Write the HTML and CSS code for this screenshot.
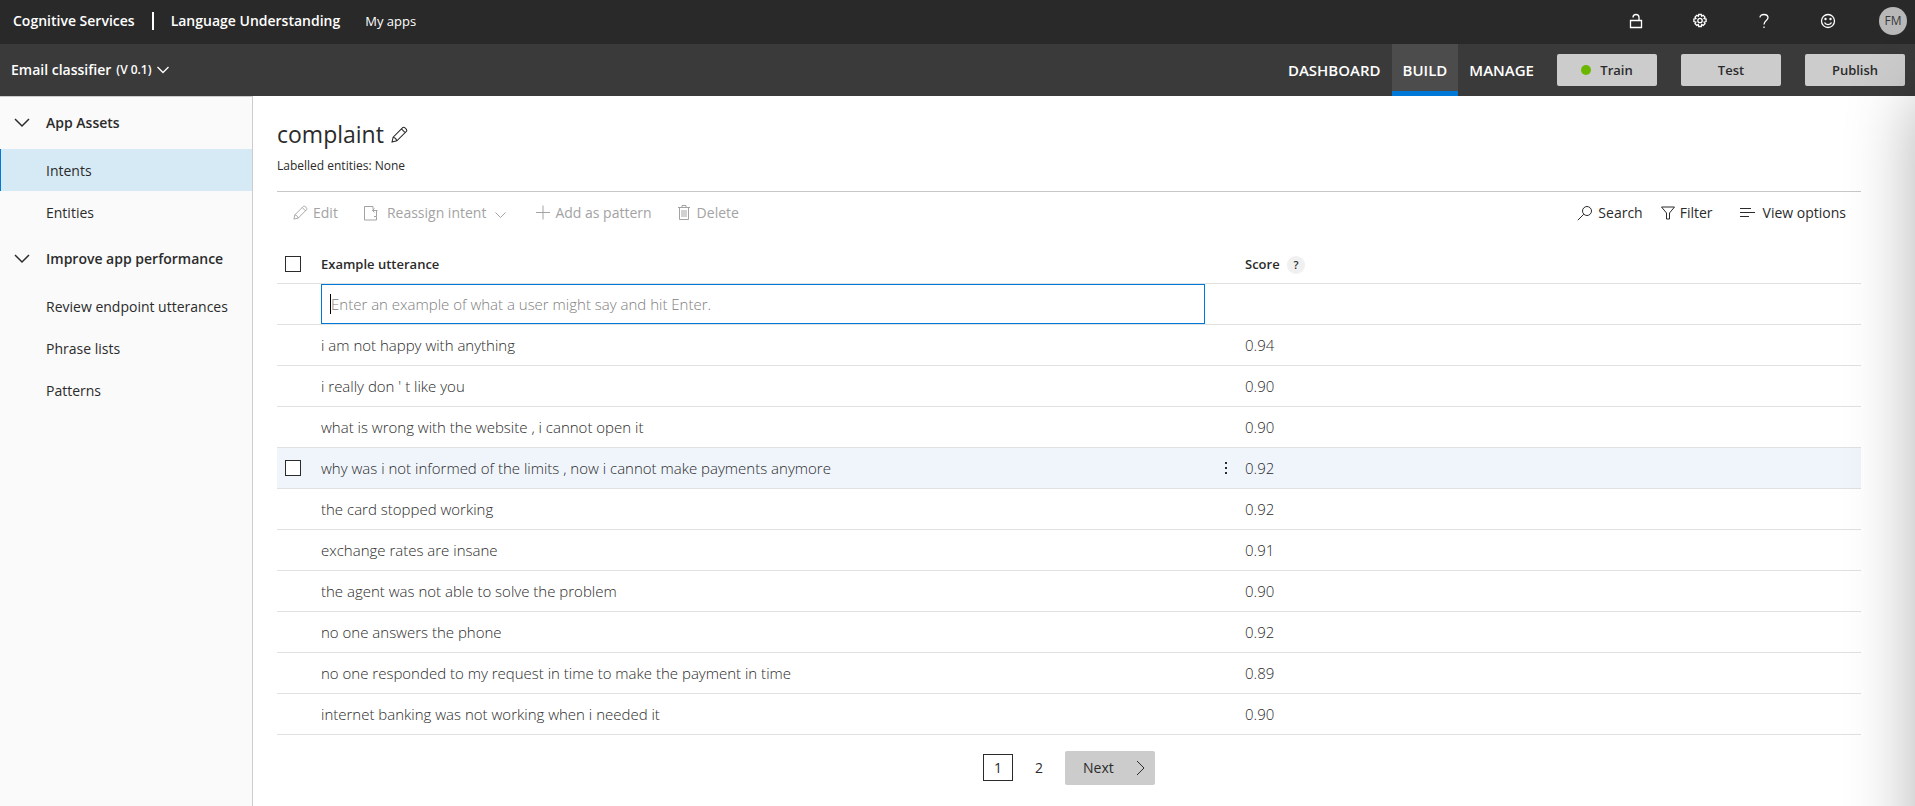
FILE: index.html
```html
<!DOCTYPE html>
<html lang="en">
<head>
  <meta charset="UTF-8" />
  <meta name="viewport" content="width=device-width, initial-scale=1.0"/>
  <title>Language Understanding</title>
  <link rel="stylesheet" href="styles.css">
</head>
<body>

  <header class="topbar">
    <a href="#" class="brand">Cognitive Services</a>
    <span class="divider"></span>
    <a href="#" class="brand">Language Understanding</a>
    <a href="#" class="my-apps">My apps</a>
    <div class="top-icons">
      <button type="button" aria-label="Security">
        <svg width="14" height="16" viewBox="0 0 14 16"><path d="M1.500 7.500h11v7h-11zM4 4.500a3 3 0 0 1 6 0v3"/></svg>
      </button>
      <button type="button" aria-label="Settings">
        <svg width="16" height="16" viewBox="0 0 16 16"><path d="M6.700 1.500h2.600l.4 1.700 1.500-.9 1.800 1.800-.9 1.500 2 .4v2.600l-2 .5.9 1.500-1.800 1.800-1.500-.9-.4 2H6.700l-.4-2-1.500.9L3 10.600l.9-1.500-2-.5V6l2-.4L3 4.100l1.800-1.800 1.500.9z"/><circle cx="8" cy="7.500" r="2.200"/></svg>
      </button>
      <button type="button" aria-label="Help">
        <svg width="12" height="16" viewBox="0 0 12 16"><path d="M2 4.500C2 2.500 3.600 1.500 6 1.500s4 1.200 4 3.200C10 7.500 6 7.500 6 11.500M6 13.500v1.500"/></svg>
      </button>
      <button type="button" aria-label="Feedback">
        <svg width="16" height="16" viewBox="0 0 16 16"><circle cx="8" cy="8" r="6.500"/><path d="M4.500 9.500c1.200 2.800 5.800 2.800 7 0"/><circle class="dot" cx="5.500" cy="6" r="1.200"/><circle class="dot" cx="10.500" cy="6" r="1.200"/></svg>
      </button>
      <button type="button" class="avatar">FM</button>
    </div>
  </header>

  <div class="appbar">
    <button type="button" class="app-name">Email classifier <small>(V 0.1)</small>
      <svg width="12" height="8" viewBox="0 0 12 8"><path d="M.5 1L6 6.500 11.500 1"/></svg>
    </button>
    <nav class="tabs">
      <a href="#">DASHBOARD</a>
      <a href="#" class="active">BUILD</a>
      <a href="#">MANAGE</a>
    </nav>
    <div class="actions">
      <button type="button"><span class="status"></span>Train</button>
      <button type="button">Test</button>
      <button type="button">Publish</button>
    </div>
  </div>

  <div class="layout">
    <nav class="sidebar">
      <button type="button" class="group">
        <svg width="16" height="10" viewBox="0 0 16 10"><path d="M1 1l7 7 7-7"/></svg>App Assets
      </button>
      <a href="#" class="active">Intents</a>
      <a href="#">Entities</a>
      <button type="button" class="group">
        <svg width="16" height="10" viewBox="0 0 16 10"><path d="M1 1l7 7 7-7"/></svg>Improve app performance
      </button>
      <a href="#">Review endpoint utterances</a>
      <a href="#">Phrase lists</a>
      <a href="#">Patterns</a>
    </nav>

    <main class="content">
      <div class="title">
        <h1>complaint</h1>
        <button type="button" aria-label="Rename intent">
          <svg width="17" height="17" viewBox="0 0 16 16"><path d="M1 15l1-4.500L11 1.500c1.300-1.300 4.800 2 3.500 3.500l-9 9zM2 10.500c1.500.2 3 1.500 3.500 3.500M9.800 2.700l3.500 3.500"/></svg>
        </button>
      </div>
      <p class="labelled">Labelled entities: None</p>

      <div class="toolbar">
        <button type="button" class="edit" disabled>
          <svg width="15" height="15" viewBox="0 0 16 16"><path d="M1 15l1-4.500L11 1.500c1.300-1.300 4.800 2 3.500 3.500l-9 9zM2 10.500c1.500.2 3 1.500 3.500 3.500M9.800 2.700l3.500 3.500"/></svg>Edit
        </button>
        <button type="button" class="reassign" disabled>
          <svg width="14" height="16" viewBox="0 0 14 16"><path d="M9 1.500H.5v13.500h12v-3.500M9 1.500v3M13.500 5.500H8.500M10.500 3.500l-2 2 2 2M12.500 5.500v6h-2.500"/></svg>Reassign intent
          <svg class="caret" width="11" height="7" viewBox="0 0 11 7"><path d="M.5 .5l5 5 5-5"/></svg>
        </button>
        <button type="button" class="add" disabled>
          <svg width="14" height="15" viewBox="0 0 14 15"><path d="M7 .500v14M0 7.500h14"/></svg>Add as pattern
        </button>
        <button type="button" class="delete" disabled>
          <svg width="12" height="15" viewBox="0 0 12 15"><path d="M0 2.500h12M4 2.500v-2h4v2M1.500 2.500v12h9v-12M4 5v7M6 5v7M8 5v7"/></svg>Delete
        </button>
        <div class="toolbar-right">
          <button type="button">
            <svg width="16" height="16" viewBox="0 0 16 16"><circle cx="10" cy="6" r="4.500"/><path d="M6.800 9.200L.8 15.200"/></svg>Search
          </button>
          <button type="button" class="filter">
            <svg width="14" height="14" viewBox="0 0 14 14"><path d="M.5 1h13L8.500 7v6h-3V7z"/></svg>Filter
          </button>
          <button type="button" class="view">
            <svg width="16" height="12" viewBox="0 0 16 12"><path d="M1 1.500h11M1 5.500h15M1 9.500h9"/></svg>View options
          </button>
        </div>
      </div>

      <table class="utterances">
        <colgroup>
          <col class="col-check">
          <col>
          <col class="col-score">
        </colgroup>
        <thead>
          <tr>
            <th><input type="checkbox" aria-label="Select all utterances"></th>
            <th>Example utterance</th>
            <th>Score <button type="button" class="help">?</button></th>
          </tr>
        </thead>
        <tbody>
          <tr class="entry">
            <td></td>
            <td><input type="text" class="new-utterance" aria-label="New utterance" placeholder="Enter an example of what a user might say and hit Enter."></td>
            <td></td>
          </tr>
          <tr><td></td><td>i am not happy with anything</td><td>0.94</td></tr>
          <tr><td></td><td>i really don ' t like you</td><td>0.90</td></tr>
          <tr><td></td><td>what is wrong with the website , i cannot open it</td><td>0.90</td></tr>
          <tr class="hovered">
            <td><input type="checkbox" aria-label="Select utterance"></td>
            <td>
              <div class="with-menu">
                why was i not informed of the limits , now i cannot make payments anymore
                <button type="button" class="more" aria-label="More">
                  <svg width="4" height="14" viewBox="0 0 4 14"><path d="M1 1h2v2H1zM1 6h2v2H1zM1 11h2v2H1z"/></svg>
                </button>
              </div>
            </td>
            <td>0.92</td>
          </tr>
          <tr><td></td><td>the card stopped working</td><td>0.92</td></tr>
          <tr><td></td><td>exchange rates are insane</td><td>0.91</td></tr>
          <tr><td></td><td>the agent was not able to solve the problem</td><td>0.90</td></tr>
          <tr><td></td><td>no one answers the phone</td><td>0.92</td></tr>
          <tr><td></td><td>no one responded to my request in time to make the payment in time</td><td>0.89</td></tr>
          <tr><td></td><td>internet banking was not working when i needed it</td><td>0.90</td></tr>
        </tbody>
      </table>

      <nav class="pager">
        <a href="#" class="current">1</a>
        <a href="#">2</a>
        <button type="button">Next
          <svg width="9" height="16" viewBox="0 0 9 16"><path d="M1 1l7 7-7 7"/></svg>
        </button>
      </nav>
    </main>
  </div>

  <!-- test panel, closed -->
  <aside class="test-panel"></aside>

</body>
</html>
```
FILE: styles.css
```css
* {
  box-sizing: border-box;
}
body {
  margin: 0;
  min-height: 100vh;
  display: flex;
  flex-direction: column;
  overflow: hidden;
  font-family: "Open Sans", "Noto Sans", sans-serif;
  font-size: 14px;
  line-height: 20px;
  color: #2b2b2b;
  background: #fff;
}
a {
  color: inherit;
  text-decoration: none;
}
button {
  font: inherit;
  color: inherit;
  background: none;
  border: none;
  padding: 0;
  cursor: pointer;
}
svg {
  flex: none;
  fill: none;
  stroke: currentColor;
  stroke-width: 1;
}

/* top bars */
.topbar {
  display: flex;
  align-items: center;
  height: 44px;
  padding: 0 8px 3px 13px;
  background: #292929;
  color: #fff;
}
.brand {
  font-weight: 600;
}
.divider {
  width: 2px;
  height: 18px;
  margin: 0 17px;
  background: #fff;
}
.my-apps {
  margin-left: 25px;
  font-size: 13px;
}
.top-icons {
  display: flex;
  align-items: center;
  gap: 32px;
  margin-left: auto;
}
.top-icons button {
  display: flex;
  align-items: center;
  justify-content: center;
  width: 32px;
  height: 32px;
}
.top-icons svg {
  stroke-width: 1.3;
}
.top-icons .dot {
  fill: #fff;
  stroke: none;
}
.top-icons .avatar {
  width: 28px;
  height: 28px;
  margin-left: 3px;
  border-radius: 50%;
  background: #b8b8b8;
  color: #3a3a3a;
  font-size: 12px;
}
.appbar {
  display: flex;
  align-items: center;
  height: 52px;
  padding: 0 10px 0 11px;
  background: #3a3a3a;
  color: #fff;
}
.app-name {
  display: flex;
  align-items: center;
  gap: 5px;
  font-weight: 600;
}
.app-name small {
  font-size: 12px;
}
.app-name svg {
  stroke-width: 1.3;
}
.tabs {
  display: flex;
  align-self: stretch;
  margin-left: auto;
  font-size: 15px;
  font-weight: 600;
}
.tabs a {
  display: flex;
  align-items: center;
  padding: 5px 11px 0;
  border-bottom: 5px solid transparent;
}
.tabs .active {
  background: #4c4c4c;
  border-bottom-color: #0078d7;
}
.actions {
  display: flex;
  gap: 24px;
  margin-left: 12px;
}
.actions button {
  display: flex;
  align-items: center;
  justify-content: center;
  width: 100px;
  height: 32px;
  border-radius: 2px;
  background: #ccc;
  color: #2b2b2b;
  font-weight: 600;
  font-size: 13px;
}
.status {
  width: 10px;
  height: 10px;
  margin-right: 9px;
  border-radius: 50%;
  background: #6bb700;
}

/* sidebar */
.layout {
  display: flex;
  flex: 1;
}
.sidebar {
  display: flex;
  flex-direction: column;
  flex: none;
  width: 253px;
  border-top: 1px solid #ccc;
  border-right: 1px solid #ccc;
  background: #fafafa;
}
.sidebar .group {
  display: flex;
  align-items: center;
  gap: 16px;
  height: 52px;
  padding-left: 14px;
  font-weight: 600;
}
.sidebar .group svg {
  stroke-width: 1.5;
}
.sidebar a {
  padding: 12px 0 10px 45px;
  border-left: 1px solid transparent;
}
.sidebar a.active {
  background: #d6eaf5;
  border-left-color: #0078d7;
}

/* content */
.content {
  flex: 1;
  padding: 20px 54px 20px 24px;
}
.title {
  display: flex;
  align-items: center;
  gap: 7px;
}
.title h1 {
  margin: 0;
  font-size: 23px;
  font-weight: 400;
  line-height: 36px;
}
.title svg {
  display: block;
}
.labelled {
  margin: 4px 0 15px;
  font-size: 12px;
}
.toolbar {
  display: flex;
  align-items: center;
  height: 42px;
  padding: 0 15px 0 16px;
  border-top: 1px solid #c8c8c8;
}
.toolbar button {
  display: flex;
  align-items: center;
  gap: 5px;
}
.toolbar button:disabled {
  color: #a3a3a3;
  cursor: default;
}
.toolbar .reassign {
  gap: 9px;
  margin-left: 26px;
}
.toolbar .caret {
  margin-top: 6px;
}
.toolbar .add {
  margin-left: 30px;
}
.toolbar .delete {
  gap: 7px;
  margin-left: 26px;
}
.toolbar-right {
  display: flex;
  margin-left: auto;
}
.toolbar .filter {
  margin-left: 18px;
}
.toolbar .view {
  gap: 8px;
  margin-left: 26px;
}

.utterances {
  width: 100%;
  margin-top: 9px;
  table-layout: fixed;
  border-collapse: collapse;
}
.col-check {
  width: 44px;
}
.col-score {
  width: 616px;
}
.utterances th,
.utterances td {
  height: 41px;
  padding: 0;
  border-bottom: 1px solid #e1e1e1;
  text-align: left;
}
.utterances th {
  padding-top: 4px;
  font-size: 13px;
  font-weight: 600;
}
.utterances td {
  font-size: 15px;
  font-weight: 300;
}
.utterances .hovered {
  background: #f0f5fc;
}
.utterances input[type="checkbox"] {
  display: block;
  appearance: none;
  width: 16px;
  height: 16px;
  margin: 0 0 0 8px;
  border: 1px solid #2b2b2b;
  background: #fff;
}
.help {
  width: 18px;
  height: 18px;
  margin-left: 4px;
  border-radius: 50%;
  background: #f0f0f0;
  font-size: 11px;
  line-height: 18px;
}
.new-utterance {
  display: block;
  width: calc(100% - 40px);
  height: 40px;
  padding: 0 9px;
  border: 1px solid #0078d7;
  outline: none;
  font: inherit;
  /* text cursor */
  background: linear-gradient(#000, #000) 8px center / 1px 20px no-repeat;
}
.new-utterance::placeholder {
  color: #808080;
}
.with-menu {
  display: flex;
  align-items: center;
  justify-content: space-between;
  padding-right: 17px;
}
.more svg {
  display: block;
  fill: currentColor;
  stroke: none;
}

.pager {
  display: flex;
  align-items: center;
  justify-content: center;
  margin-top: 16px;
}
.pager a {
  width: 30px;
  line-height: 25px;
  margin-right: 11px;
  border: 1px solid transparent;
  text-align: center;
}
.pager .current {
  border-color: #2b2b2b;
}
.pager button {
  display: flex;
  align-items: center;
  justify-content: space-between;
  width: 90px;
  height: 34px;
  padding: 0 10px 0 18px;
  border-radius: 2px;
  background: #ccc;
}

.test-panel {
  position: fixed;
  top: 96px;
  left: 100%;
  bottom: -100px;
  width: 400px;
  box-shadow: 0 0 64px rgba(0,0,0,0.3);
}
```
